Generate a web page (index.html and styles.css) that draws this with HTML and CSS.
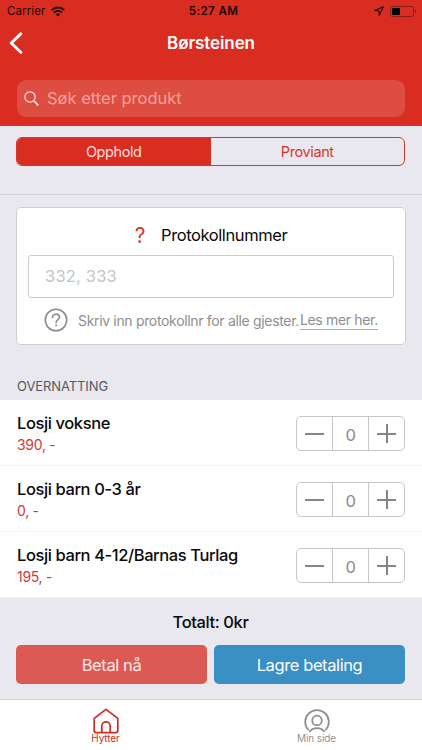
FILE: index.html
```html
<!DOCTYPE html>
<html lang="no">
<head>
  <meta charset="UTF-8">
  <meta name="viewport" content="width=device-width, initial-scale=1">
  <title>Børsteinen</title>
  <link rel="stylesheet" href="styles.css">
</head>
<body>

  <header class="header">
    <div class="status">
      <div class="status-left">
        <span class="carrier">Carrier</span>
        <svg class="wifi" width="14" height="11" viewBox="0 0 14 11" fill="none" stroke="#1c0504" stroke-width="1.9">
          <path d="M0.8 4.1a8.8 8.8 0 0 1 12.4 0"/>
          <path d="M3 6.6a5.6 5.6 0 0 1 8 0"/>
          <path d="M7 10.6L4.9 8.4a3 3 0 0 1 4.2 0z" fill="#1c0504" stroke="none"/>
        </svg>
      </div>
      <span class="time">5:27 AM</span>
      <div class="status-right">
        <svg width="10" height="10" viewBox="0 0 10 10" fill="none" stroke="#1c0504" stroke-width="1.1" stroke-linejoin="round">
          <path d="M9.3 0.8L0.8 4.5l4.2 0.5 0.3 4.2z"/>
        </svg>
        <svg width="27" height="11" viewBox="0 0 27 11">
          <rect x="0.5" y="0.5" width="23" height="10" rx="2" fill="none" stroke="#8f1d17"/>
          <rect x="2" y="2" width="8" height="7" fill="#000"/>
          <path d="M25 3.6c1.6 0.6 1.6 3.2 0 3.8z" fill="#8f1d17"/>
        </svg>
      </div>
    </div>

    <div class="nav">
      <svg class="back" width="14" height="22" viewBox="0 0 14 22" fill="none" stroke="#fff" stroke-width="2.9" stroke-linecap="round" stroke-linejoin="round">
        <path d="M11.8 1.9L2.2 11l9.6 9.2"/>
      </svg>
      <h1 class="title">Børsteinen</h1>
    </div>

    <div class="search">
      <svg width="15" height="15" viewBox="0 0 15 15" fill="none" stroke="#fbe4e2" stroke-width="1.2">
        <circle cx="6" cy="6" r="5.2"/>
        <path d="M9.9 9.9l4.4 4.4" stroke-width="1.7"/>
      </svg>
      <span class="search-text">Søk etter produkt</span>
    </div>
  </header>

  <div class="tabs">
    <div class="segment">
      <div class="seg active">Opphold</div>
      <div class="seg">Proviant</div>
    </div>
  </div>

  <section class="card">
    <div class="card-title">
      <span class="mark">?</span>
      <span class="card-name">Protokollnummer</span>
    </div>
    <div class="input">332, 333</div>
    <div class="hint">
      <svg width="24" height="24" viewBox="0 0 24 24" fill="none" stroke="#8b8b8b" stroke-width="1.6">
        <circle cx="12" cy="12" r="10.7"/>
        <path d="M8.5 9.6c0-4.5 7-4.5 7-0.4 0 2.4-3.4 2.6-3.4 5.2" stroke-linecap="round"/>
        <circle cx="12.1" cy="17.3" r="1" fill="#8b8b8b" stroke="none"/>
      </svg>
      <span class="hint-text">Skriv inn protokollnr for alle gjester.</span>
      <a class="more">Les mer her.</a>
    </div>
  </section>

  <h2 class="section">OVERNATTING</h2>

  <div class="list">
    <div class="row">
      <div>
        <div class="name">Losji voksne</div>
        <div class="price">390, -</div>
      </div>
      <div class="stepper">
        <span class="step minus"></span>
        <span class="count">0</span>
        <span class="step plus"></span>
      </div>
    </div>
    <div class="row">
      <div>
        <div class="name">Losji barn 0-3 år</div>
        <div class="price">0, -</div>
      </div>
      <div class="stepper">
        <span class="step minus"></span>
        <span class="count">0</span>
        <span class="step plus"></span>
      </div>
    </div>
    <div class="row">
      <div>
        <div class="name">Losji barn 4-12/Barnas Turlag</div>
        <div class="price">195, -</div>
      </div>
      <div class="stepper">
        <span class="step minus"></span>
        <span class="count">0</span>
        <span class="step plus"></span>
      </div>
    </div>
  </div>

  <div class="checkout">
    <div class="total">Totalt: 0kr</div>
    <div class="buttons">
      <div class="btn pay">Betal nå</div>
      <div class="btn save">Lagre betaling</div>
    </div>
  </div>

  <nav class="tabbar">
    <div class="tab selected">
      <svg width="26" height="26" viewBox="0 0 26 26" fill="none" stroke="#d02b23" stroke-width="1.7" stroke-linejoin="round">
        <path d="M1.2 10.4L13 1.3l11.8 9.1v12.2a2 2 0 0 1-2 2H3.2a2 2 0 0 1-2-2z"/>
        <path d="M8.8 24.4V18a4.2 4.2 0 0 1 8.4 0v6.4"/>
      </svg>
      <span>Hytter</span>
    </div>
    <div class="tab">
      <svg width="26" height="26" viewBox="0 0 26 26" fill="none" stroke="#8c8c8c" stroke-width="1.7" stroke-linecap="round">
        <path d="M4.2 21.8a11.8 11.8 0 1 1 17.6 0"/>
        <circle cx="13" cy="12.4" r="4.8"/>
        <path d="M5.8 23.4c3.4-4.4 11-4.4 14.4 0"/>
      </svg>
      <span>Min side</span>
    </div>
  </nav>

</body>
</html>
```
FILE: styles.css
```css
* {
  box-sizing: border-box;
}
body {
  margin: 0;
  width: 422px;
  height: 750px;
  overflow: hidden;
  font-family: Inter, "Liberation Sans", sans-serif;
  font-size: 16.5px;
  letter-spacing: -0.4px;
  background: #e9e8ee;
  color: #0a0a0a;
  white-space: nowrap;
}
svg {
  flex-shrink: 0;
}

/* header */
.header {
  height: 126px;
  background: #da2d22;
}
.status {
  display: grid;
  grid-template-columns: 1fr auto 1fr;
  align-items: center;
  height: 22px;
  padding: 0 5px 0 7px;
  color: #1c0504;
  font-size: 11.5px;
  letter-spacing: 0.1px;
}
.status-left, .status-right {
  display: flex;
  align-items: center;
  gap: 6px;
}
.status-right {
  justify-content: flex-end;
}
.time {
  font-weight: 600;
  letter-spacing: 0.4px;
  margin-left: 3px;
}
.nav {
  display: grid;
  grid-template-columns: 20px 1fr 20px;
  align-items: center;
  height: 42px;
  padding: 0 9px;
}
.title {
  margin: 0;
  font-size: 17px;
  font-weight: 600;
  text-align: center;
  color: #fff;
  letter-spacing: -0.1px;
}
.search {
  display: flex;
  align-items: center;
  gap: 8px;
  height: 37px;
  margin: 16px 17px 0;
  padding-left: 7px;
  border-radius: 9px;
  background: #de4d41;
  color: #f4a39c;
}
.search-text {
  letter-spacing: 0;
  position: relative;
  top: -1px;
}

/* segmented control */
.tabs {
  height: 69px;
  padding: 11px 17px 0 16px;
  border-bottom: 1px solid #d3d2d7;
}
.segment {
  display: flex;
  height: 29px;
  border: 1px solid #d5372f;
  border-radius: 6px;
  overflow: hidden;
}
.seg {
  width: 195px;
  display: flex;
  align-items: center;
  justify-content: center;
  font-size: 14.5px;
  color: #d5372f;
}
.seg.active {
  background: #da2d22;
  color: #ffdfdc;
}

/* protocol card */
.card {
  height: 138px;
  margin: 12px 16px 0;
  padding: 0 11px;
  border: 1px solid #cfced3;
  border-radius: 5px;
  background: #fff;
}
.card-title {
  display: flex;
  align-items: center;
  justify-content: center;
  gap: 16px;
  height: 47px;
  padding-top: 7px;
}
.mark {
  font-size: 21px;
  color: #d5372f;
}
.input {
  height: 43px;
  padding-left: 16px;
  border: 1px solid #cdcdcd;
  border-radius: 3px;
  letter-spacing: 0.2px;
  line-height: 41px;
  color: #c3c3c6;
}
.hint {
  display: flex;
  align-items: center;
  height: 44px;
  padding-left: 16px;
  font-size: 14px;
  letter-spacing: -0.33px;
  color: #8e8e8e;
}
.hint-text {
  margin-left: 10px;
}
.more {
  margin-left: 1px;
  padding-bottom: 1px;
  border-bottom: 1px solid #aaa;
}
.section {
  height: 55px;
  margin: 0;
  padding: 33px 17px 0;
  font-size: 13px;
  line-height: 16px;
  font-weight: 400;
  letter-spacing: -0.1px;
  color: #58585c;
}

/* products */
.list {
  height: 198px;
  background: #fff;
}
.row {
  display: flex;
  justify-content: space-between;
  height: 66px;
  padding: 13px 17px 0;
  border-bottom: 1px solid #f3f3f6;
}
.name {
  font-weight: 500;
  line-height: 20px;
}
.price {
  margin-top: 3px;
  font-size: 14px;
  letter-spacing: -0.3px;
  line-height: 18px;
  color: #cf3a33;
}
.stepper {
  display: grid;
  grid-template-columns: 35px 37px 35px;
  grid-template-rows: 33px;
  width: 109px;
  height: 35px;
  margin-top: 3px;
  border: 1px solid #c6c6c6;
  border-radius: 5px;
}
.step {
  background: linear-gradient(#858585, #858585) center 16px / 19px 2px no-repeat;
}
.plus {
  background: linear-gradient(#858585, #858585) center 16px / 19px 2px no-repeat,
    linear-gradient(#858585, #858585) center 7px / 2px 19px no-repeat;
}
.count {
  border-left: 1px solid #c6c6c6;
  border-right: 1px solid #c6c6c6;
  text-align: center;
  line-height: 36px;
  color: #8a8a8a;
}

/* checkout */
.checkout {
  height: 102px;
  padding: 0 17px 0 16px;
  border-bottom: 1px solid #d3d2d7;
}
.total {
  height: 47px;
  line-height: 48px;
  font-weight: 500;
  text-align: center;
}
.buttons {
  display: grid;
  grid-template-columns: 191px 191px;
  justify-content: space-between;
}
.btn {
  height: 39px;
  border-radius: 5px;
  line-height: 40px;
  text-align: center;
  color: #fff;
}
.pay {
  background: #db5b54;
  color: #ffe9e7;
}
.save {
  background: #3a8fc4;
}

/* bottom tab bar */
.tabbar {
  display: grid;
  grid-template-columns: 1fr 1fr;
  height: 50px;
  background: #fff;
}
.tab {
  display: flex;
  flex-direction: column;
  align-items: center;
  padding-top: 8px;
  font-size: 10px;
  line-height: 9px;
  letter-spacing: -0.1px;
  color: #929292;
}
.tab.selected {
  color: #d02b23;
}
```
